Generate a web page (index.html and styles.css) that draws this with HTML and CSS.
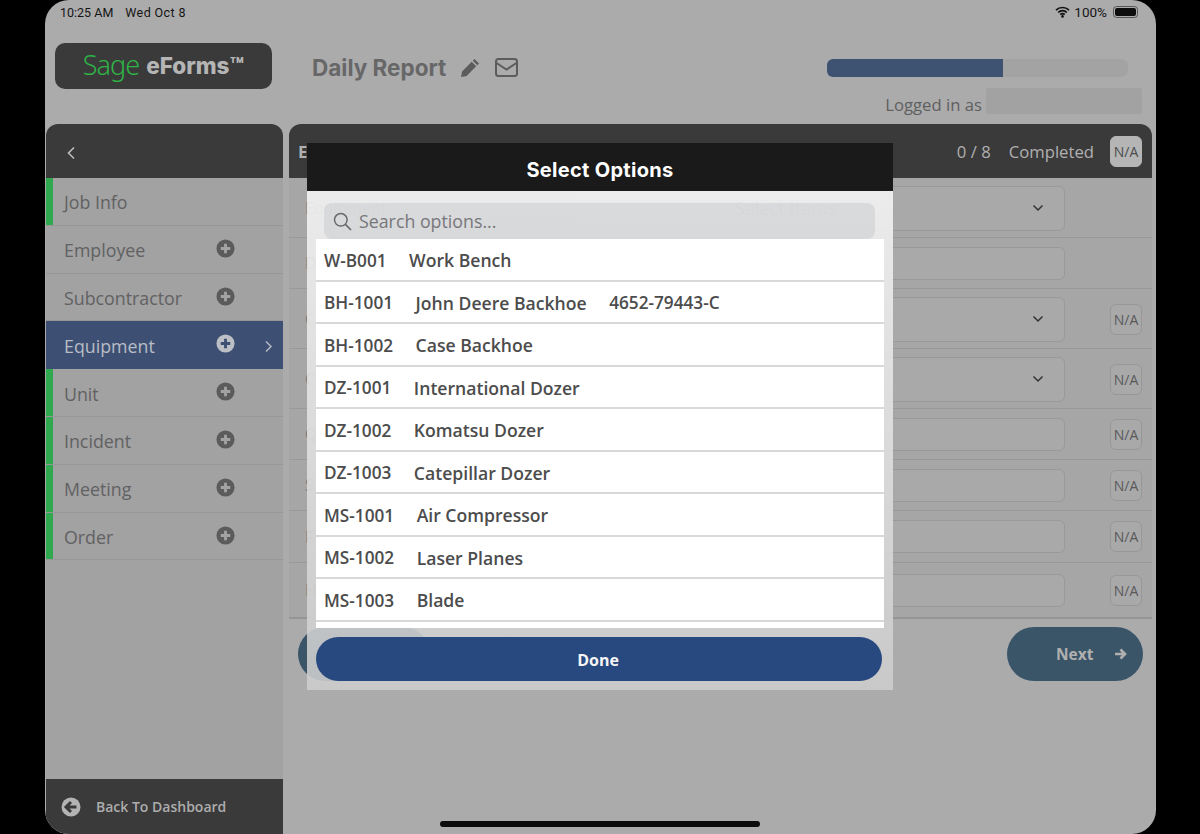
FILE: index.html
```html
<!DOCTYPE html>
<html lang="en">
<head>
<meta charset="utf-8">
<title>Sage eForms - Daily Report</title>
<link rel="stylesheet" href="styles.css">
</head>
<body>
<div class="device">
  <div class="status">
    <div class="status-left"><span>10:25 AM</span><span>Wed Oct 8</span></div>
    <div class="status-right">
      <svg class="wifi" width="15" height="12" viewBox="0 0 15 12"><path d="M1 4.200a9.200 9.200 0 0 1 13 0M3.200 6.500a6 6 0 0 1 8.600 0M5.300 8.600a3 3 0 0 1 4.400 0" fill="none" stroke="#111" stroke-width="1.700"/><circle cx="7.500" cy="10.400" r="1.300" fill="#111"/></svg>
      <span>100%</span>
      <span class="battery"><span class="battery-fill"></span></span>
    </div>
  </div>

  <header class="top">
    <div class="logo"><span class="sage">Sage</span><span class="eforms">eForms™</span></div>
    <h1 class="title">Daily Report</h1>
    <svg class="pencil" width="20" height="20" viewBox="0 0 20 20"><path d="M14.500 1 19 5.500 17.300 7.200 12.800 2.700zM11.700 3.800 16.200 8.300 6.600 17.900 1 19 2.100 13.400z" fill="#5c5c5d"/></svg>
    <svg class="mail" width="23" height="19" viewBox="0 0 23 19"><rect x="1" y="1" width="21" height="17" rx="2.500" fill="none" stroke="#5c5c5d" stroke-width="2"/><path d="M1.500 5 11.500 11.500 21.500 5" fill="none" stroke="#5c5c5d" stroke-width="2"/></svg>
    <div class="top-right">
      <div class="progress"><div class="progress-fill"></div></div>
      <div class="logged"><span class="logged-text">Logged in as</span><span class="blurred"></span></div>
    </div>
  </header>

  <div class="work">
    <aside class="side">
      <div class="side-head"><svg width="10" height="14" viewBox="0 0 10 14"><path d="M8 1.500 2.500 7 8 12.500" fill="none" stroke="#bdbdbd" stroke-width="1.600"/></svg></div>
      <nav class="side-nav">
        <div class="side-row side-ok"><span>Job Info</span></div>
        <div class="side-row"><span>Employee</span><svg class="plus" viewBox="0 0 20 20"><circle cx="10" cy="10" r="9.500" fill="#5b5b5c"/><path d="M10 5v10M5 10h10" stroke="#a3a3a4" stroke-width="3"/></svg></div>
        <div class="side-row"><span>Subcontractor</span><svg class="plus" viewBox="0 0 20 20"><circle cx="10" cy="10" r="9.500" fill="#5b5b5c"/><path d="M10 5v10M5 10h10" stroke="#a3a3a4" stroke-width="3"/></svg></div>
        <div class="side-row active"><span>Equipment</span><svg class="plus" viewBox="0 0 20 20"><circle cx="10" cy="10" r="9.500" fill="#bcbfc5"/><path d="M10 5v10M5 10h10" stroke="#3d5073" stroke-width="3"/></svg><svg class="chev" width="9" height="13" viewBox="0 0 9 13"><path d="M2 1.500 7 6.500 2 11.500" fill="none" stroke="#b9bdc6" stroke-width="1.400"/></svg></div>
        <div class="side-row side-ok"><span>Unit</span><svg class="plus" viewBox="0 0 20 20"><circle cx="10" cy="10" r="9.500" fill="#5b5b5c"/><path d="M10 5v10M5 10h10" stroke="#a3a3a4" stroke-width="3"/></svg></div>
        <div class="side-row side-ok"><span>Incident</span><svg class="plus" viewBox="0 0 20 20"><circle cx="10" cy="10" r="9.500" fill="#5b5b5c"/><path d="M10 5v10M5 10h10" stroke="#a3a3a4" stroke-width="3"/></svg></div>
        <div class="side-row side-ok"><span>Meeting</span><svg class="plus" viewBox="0 0 20 20"><circle cx="10" cy="10" r="9.500" fill="#5b5b5c"/><path d="M10 5v10M5 10h10" stroke="#a3a3a4" stroke-width="3"/></svg></div>
        <div class="side-row side-ok"><span>Order</span><svg class="plus" viewBox="0 0 20 20"><circle cx="10" cy="10" r="9.500" fill="#5b5b5c"/><path d="M10 5v10M5 10h10" stroke="#a3a3a4" stroke-width="3"/></svg></div>
      </nav>
      <div class="side-foot">
        <svg width="20" height="20" viewBox="0 0 20 20"><circle cx="10" cy="10" r="9.500" fill="#b3b3b3"/><path d="M15.500 10H6M10 5 5 10l5 5" fill="none" stroke="#3a3a3b" stroke-width="3"/></svg>
        <span>Back To Dashboard</span>
      </div>
    </aside>

    <main class="main">
      <div class="main-head">
        <span class="main-title">E</span>
        <span class="count">0 / 8</span>
        <span class="completed">Completed</span>
        <span class="na na-head">N/A</span>
      </div>
      <div class="form">
        <div class="row row-sel"><span class="label">Equipment</span><div class="field"><span class="placeholder">Select Items</span><svg class="down" width="12" height="8" viewBox="0 0 12 8"><path d="M1.500 1.500 6 6l4.500-4.500" fill="none" stroke="#333" stroke-width="1.500"/></svg></div><span class="na-gap"></span></div>
        <div class="row row-in"><span class="label">D</span><div class="field"></div><span class="na-gap"></span></div>
        <div class="row row-sel"><span class="label">C</span><div class="field"><svg class="down" width="12" height="8" viewBox="0 0 12 8"><path d="M1.500 1.500 6 6l4.500-4.500" fill="none" stroke="#333" stroke-width="1.500"/></svg></div><span class="na">N/A</span></div>
        <div class="row row-sel"><span class="label">C</span><div class="field"><svg class="down" width="12" height="8" viewBox="0 0 12 8"><path d="M1.500 1.500 6 6l4.500-4.500" fill="none" stroke="#333" stroke-width="1.500"/></svg></div><span class="na">N/A</span></div>
        <div class="row row-in"><span class="label">Q</span><div class="field"></div><span class="na">N/A</span></div>
        <div class="row row-in"><span class="label">S</span><div class="field"></div><span class="na">N/A</span></div>
        <div class="row row-in row-w"><span class="label">F</span><div class="field"></div><span class="na">N/A</span></div>
        <div class="row row-in row-last"><span class="label">H</span><div class="field"></div><span class="na">N/A</span></div>
      </div>
      <div class="actions">
        <div class="btn btn-prev"></div>
        <div class="btn btn-next"><span>Next</span><svg width="13" height="12" viewBox="0 0 13 12"><path d="M1 6h10M6.500 1.500 11 6l-4.500 4.500" fill="none" stroke="#b0b0b0" stroke-width="2.600"/></svg></div>
      </div>
    </main>
  </div>

  <div class="home-bar"></div>

  <section class="modal">
    <h2 class="modal-head">Select Options</h2>
    <div class="modal-body">
      <div class="search">
        <svg width="19" height="19" viewBox="0 0 19 19"><circle cx="7.800" cy="7.800" r="6.300" fill="none" stroke="#6a6a6b" stroke-width="1.500"/><path d="M12.400 12.400 18 18" stroke="#6a6a6b" stroke-width="1.700"/></svg>
        <span>Search options...</span>
      </div>
      <ul class="options">
        <li><span class="code">W-B001</span><span class="name">Work Bench</span></li>
        <li><span class="code">BH-1001</span><span class="name">John Deere Backhoe</span><span class="code">4652-79443-C</span></li>
        <li><span class="code">BH-1002</span><span class="name">Case Backhoe</span></li>
        <li><span class="code">DZ-1001</span><span class="name">International Dozer</span></li>
        <li><span class="code">DZ-1002</span><span class="name">Komatsu Dozer</span></li>
        <li><span class="code">DZ-1003</span><span class="name">Catepillar Dozer</span></li>
        <li><span class="code">MS-1001</span><span class="name">Air Compressor</span></li>
        <li><span class="code">MS-1002</span><span class="name">Laser Planes</span></li>
        <li><span class="code">MS-1003</span><span class="name">Blade</span></li>
      </ul>
      <div class="done-btn">Done</div>
    </div>
  </section>
</div>
</body>
</html>
```
FILE: styles.css
```css
* { box-sizing: border-box; }
html, body { margin: 0; padding: 0; height: 100%; overflow: hidden; background: #000; }
body { font-family: "Open Sans", "Liberation Sans", sans-serif; }

.device {
  position: relative;
  width: 1111px;
  height: 834px;
  margin-left: 45px;
  padding: 0 4px 0 1px;
  background: #ababac;
  border-radius: 24px;
  overflow: hidden;
  display: flex;
  flex-direction: column;
}

.status {
  height: 24px;
  padding: 0 14px;
  display: flex;
  justify-content: space-between;
  align-items: center;
  font-family: Roboto, sans-serif;
  font-size: 12.500px;
  color: #151515;
}
.status-left { display: flex; gap: 12px; }
.status-left span + span { letter-spacing: .4px; }
.status-right { display: flex; align-items: center; gap: 4px; font-size: 13.500px; }
.battery {
  width: 25px;
  height: 12px;
  margin-left: 2px;
  padding: 1px;
  border: 1px solid #555;
  border-radius: 3.500px;
  display: flex;
}
.battery-fill { flex: 1; background: #0d0d0d; border-radius: 2px; }

.top {
  height: 100px;
  padding: 19px 10px 0 9px;
  display: flex;
  align-items: flex-start;
}
.logo {
  width: 217px;
  height: 46px;
  padding-bottom: 2px;
  background: #3a3a3b;
  border-radius: 10px;
  display: flex;
  align-items: center;
  justify-content: center;
  gap: 7px;
}
.sage { font-family: "Noto Sans", sans-serif; font-weight: 300; font-size: 27px; letter-spacing: -1px; color: #2eb345; line-height: 40px; }
.eforms { font-family: Inter, sans-serif; font-weight: 800; font-size: 22.500px; color: #b5b5b5; }

.title {
  margin: 12px 0 0 40px;
  font-family: Inter, sans-serif;
  font-size: 22.500px;
  line-height: 26px;
  font-weight: 700;
  color: #676768;
}
.pencil { margin: 15px 0 0 14px; }
.mail { margin: 15px 0 0 15px; }

.top-right { margin-left: auto; width: 315px; padding-top: 16px; display: flex; flex-direction: column; align-items: flex-end; }
.progress { width: 301px; height: 18px; margin-right: 14px; background: #a3a3a4; border-radius: 6px; overflow: hidden; }
.progress-fill { width: 176px; height: 100%; background: #3e5272; }
.logged { margin-top: 8px; display: flex; align-items: center; gap: 4px; font-size: 16.700px; color: #5f5f60; }
.logged-text { margin-top: 8px; }
.blurred { width: 156px; height: 26px; background: #a2a2a3; border-radius: 3px; }

.work { flex: 1; display: grid; grid-template-columns: 237px 863px; column-gap: 6px; min-height: 0; }

.side {
  display: flex;
  flex-direction: column;
  background: #a2a2a3;
  border-radius: 12px 12px 0 0;
  overflow: hidden;
}
.side-head { height: 54px; background: #3a3a3b; padding: 19px 0 0 20px; }
.side-nav { flex: 1; }
.side-row {
  position: relative;
  height: 47.800px;
  padding: 2px 0 0 18px;
  display: flex;
  align-items: center;
  border-bottom: 1px solid #979798;
  font-size: 17.800px;
  font-weight: 500;
  color: #616162;
}
.side-row.side-ok { box-shadow: inset 7px 0 0 #2fa84f; }
.side-row.active { background: #3d5073; color: #b9bdc6; border-bottom-color: #3d5073; }
.plus { position: absolute; left: 170px; top: 13px; width: 19px; height: 19px; }
.chev { position: absolute; left: 218px; top: 19px; }
.side-foot {
  height: 55px;
  background: #3a3a3b;
  padding-left: 15px;
  display: flex;
  align-items: center;
  gap: 15px;
  font-size: 14px;
  font-weight: 600;
  color: #adadad;
}

.main-head {
  height: 54px;
  background: #3a3a3b;
  border-radius: 12px 12px 0 0;
  padding: 0 10px 0 9px;
  display: flex;
  align-items: center;
  color: #b0b0b0;
  font-size: 16.700px;
}
.main-title { font-weight: 700; margin-right: auto; }
.count { margin-right: 18px; }
.completed { margin-right: 16px; }
.na {
  width: 32px;
  height: 31px;
  flex: none;
  border: 1px solid #979798;
  border-radius: 6px;
  display: flex;
  align-items: center;
  justify-content: center;
  background: #a9a9aa;
  font-size: 14px;
  color: #59595a;
}
.na-head { background: #b5b5b5; border-color: #b5b5b5; color: #4c4c4d; }
.na-gap { width: 32px; flex: none; }

.form { background: #a6a6a7; border-bottom: 2px solid #959596; }
.row {
  display: flex;
  align-items: center;
  padding: 0 10px 0 16px;
  border-bottom: 1px solid #99999a;
}
.row-sel { height: 60px; padding-top: 1px; }
.row-in { height: 51px; }
.row-w { height: 52px; }
.row-last { height: 54px; border-bottom: 0; }
.row-sel .field { height: 45px; }
.row-in .field { height: 33px; }
.label { width: 268px; flex: none; font-size: 16px; color: #59595a; opacity: .6; }
.placeholder { opacity: .7; font-size: 18px; }
.field {
  flex: 1;
  margin-right: 45px;
  padding: 0 20px 0 161px;
  background: #a9a9aa;
  border: 1px solid #99999a;
  border-radius: 6px;
  display: flex;
  align-items: center;
  justify-content: space-between;
  font-size: 16px;
  color: #59595a;
}
.down { margin-left: auto; }

.actions { padding: 8px 9px 0; display: flex; justify-content: space-between; }
.btn { height: 54px; border-radius: 27px; background: #3a5468; }
.btn-prev { width: 132px; }
.btn-next {
  width: 136px;
  padding: 0 16px 0 49px;
  display: flex;
  align-items: center;
  justify-content: space-between;
  font-size: 15.500px;
  font-weight: 700;
  color: #b0b0b0;
}

.home-bar {
  position: absolute;
  left: 395px;
  bottom: 7px;
  width: 320px;
  height: 6px;
  border-radius: 3px;
  background: #0c0c0c;
}

.modal {
  position: absolute;
  left: 262px;
  top: 143px;
  width: 586px;
  height: 547px;
  display: flex;
  flex-direction: column;
}
.modal-head {
  height: 48px;
  margin: 0;
  flex: none;
  background: #1a1a1a;
  color: #fff;
  font-family: Inter, sans-serif;
  font-size: 20px;
  letter-spacing: .3px;
  font-weight: 700;
  line-height: 54px;
  text-align: center;
}
.modal-body {
  flex: 1;
  padding: 12px 9px 9px;
  background: linear-gradient(rgba(243,243,243,.9), rgba(205,205,205,.88));
  display: flex;
  flex-direction: column;
}
.search {
  height: 36px;
  margin: 0 9px 0 8px;
  padding: 0 0 0 9px;
  flex: none;
  background: rgba(190,192,196,.38);
  border-radius: 8px;
  display: flex;
  align-items: center;
  gap: 7px;
  font-size: 17.800px;
  color: #77777a;
}
.options {
  margin: 0;
  padding: 0;
  height: 389px;
  flex: none;
  overflow: hidden;
  list-style: none;
  background: #fff;
}
.options li {
  height: 42.500px;
  padding: 2px 8px 0;
  display: flex;
  align-items: center;
  gap: 22.500px;
  border-bottom: 2px solid #d9d9d9;
  font-weight: 600;
  color: #4c4c4c;
}
.code { font-size: 17.200px; }
.name { font-size: 17.600px; }
.done-btn {
  height: 44px;
  width: 566px;
  margin-top: 9px;
  background: #27497f;
  border-radius: 22px;
  color: #f5f5f5;
  font-size: 16px;
  font-weight: 700;
  line-height: 46px;
  text-align: center;
  padding-right: 2px;
}
```
